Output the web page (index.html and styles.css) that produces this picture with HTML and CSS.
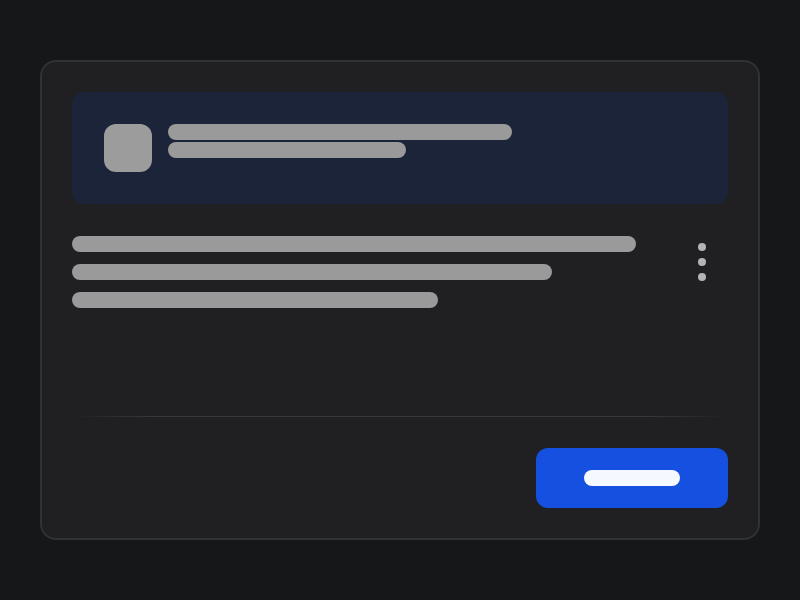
FILE: index.html
```html
<!DOCTYPE html>
<html lang="en">
<head>
<meta charset="utf-8">
<title>Card skeleton</title>
<link rel="stylesheet" href="styles.css">
</head>
<body>
<div class="card">
  <div class="header">
    <div class="avatar"></div>
    <div class="title-lines">
      <div class="bar bar-title"></div>
      <div class="bar bar-sub"></div>
    </div>
  </div>
  <div class="content">
    <div class="lines">
      <div class="bar line-1"></div>
      <div class="bar line-2"></div>
      <div class="bar line-3"></div>
    </div>
    <div class="menu">
      <span class="dot"></span>
      <span class="dot"></span>
      <span class="dot"></span>
    </div>
  </div>
  <div class="divider"></div>
  <div class="footer">
    <button class="btn"><span class="btn-label"></span></button>
  </div>
</div>
</body>
</html>
```
FILE: styles.css
```css
html, body {
  margin: 0;
  padding: 0;
}
body {
  background: #161719;
  width: 800px;
  height: 600px;
  font-family: "Inter", "Liberation Sans", sans-serif;
  overflow: hidden;
}
.card {
  box-sizing: border-box;
  width: 720px;
  height: 480px;
  margin: 60px 40px;
  background: #202022;
  border: 2px solid #323235;
  border-radius: 16px;
  padding: 30px;
  display: flex;
  flex-direction: column;
}
.header {
  box-sizing: border-box;
  height: 112px;
  background: #1b2439;
  border-radius: 12px;
  padding: 32px;
  display: flex;
  gap: 16px;
}
.avatar {
  width: 48px;
  height: 48px;
  border-radius: 12px;
  background: #9c9c9c;
  flex: none;
}
.title-lines {
  display: flex;
  flex-direction: column;
  gap: 2px;
}
.bar {
  height: 16px;
  border-radius: 8px;
  background: #9a9a9a;
}
.bar-title { width: 344px; }
.bar-sub { width: 238px; }
.content {
  margin-top: 32px;
  flex: 1;
  display: flex;
  justify-content: space-between;
  align-items: flex-start;
}
.lines {
  display: flex;
  flex-direction: column;
  gap: 12px;
}
.line-1 { width: 564px; }
.line-2 { width: 480px; }
.line-3 { width: 366px; }
.menu {
  display: flex;
  flex-direction: column;
  gap: 7px;
  margin-top: 7px;
  margin-right: 22px;
}
.dot {
  width: 8px;
  height: 8px;
  border-radius: 50%;
  background: #b4b4b6;
}
.divider {
  height: 1px;
  background: linear-gradient(90deg, rgba(58,58,61,0) 0%, #38383b 12%, #38383b 88%, rgba(58,58,61,0) 100%);
}
.footer {
  margin-top: 31px;
  display: flex;
  justify-content: flex-end;
}
.btn {
  width: 192px;
  height: 60px;
  border: none;
  border-radius: 12px;
  background: #1650e0;
  display: flex;
  align-items: center;
  justify-content: center;
  padding: 0;
}
.btn-label {
  width: 96px;
  height: 16px;
  border-radius: 8px;
  background: #f5f8ff;
}
```
